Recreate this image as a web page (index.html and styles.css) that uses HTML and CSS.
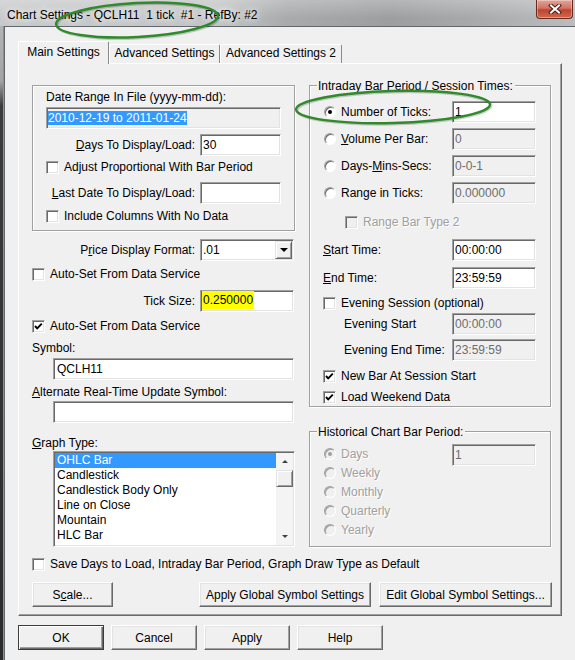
FILE: index.html
```html
<!DOCTYPE html>
<html lang="en">
<head>
    <meta charset="UTF-8">
    <meta name="viewport" content="width=device-width, initial-scale=1.0">
    <title>Chart Settings - QCLH11 1 tick #1 - RefBy: #2</title>
    <link rel="stylesheet" href="styles.css">
</head>
<body>
    <div class="window">
        <div class="titlebar">
            <span class="title">Chart Settings - QCLH11&nbsp; 1 tick&nbsp; #1 - RefBy: #2</span>
            <span class="close-btn">
                <svg width="14" height="10" viewBox="0 0 14 10">
                    <path d="M3 1.5 L11 8.5 M11 1.5 L3 8.5" stroke="#4a1e16" stroke-width="4" stroke-linecap="square"/>
                    <path d="M3 1.5 L11 8.5 M11 1.5 L3 8.5" stroke="#fff" stroke-width="2" stroke-linecap="square"/>
                </svg>
            </span>
        </div>
        <div class="frame">
            <div class="frame-edge"></div>
            <div class="client">
                <div class="tabs">
                    <div class="tab active">Main Settings</div>
                    <div class="tab tab-adv">Advanced Settings</div>
                    <div class="tab tab-adv2">Advanced Settings 2</div>
                </div>
                <div class="panel">
                    <div class="columns">
                        <!-- left column: date range, price format, symbols, graph type -->
                        <div class="col">
                            <div class="box date-box">
                                <div class="lbl">Date Range In File (yyyy-mm-dd):</div>
                                <div class="field readonly"><span class="selection">2010-12-19 to 2011-01-24</span></div>
                                <div class="form-row days-row">
                                    <span class="lbl"><u>D</u>ays To Display/Load:</span>
                                    <div class="field date-input">30</div>
                                </div>
                                <div class="check-row adjust-row"><span class="checkbox"></span>Adjust Proportional With Bar Period</div>
                                <div class="form-row last-row">
                                    <span class="lbl"><u>L</u>ast Date To Display/Load:</span>
                                    <div class="field date-input"></div>
                                </div>
                                <div class="check-row include-row"><span class="checkbox"></span>Include Columns With No Data</div>
                            </div>

                            <div class="form-row price-row">
                                <span class="lbl">P<u>r</u>ice Display Format:</span>
                                <div class="field combo">
                                    <span>.01</span>
                                    <span class="combo-btn"><span class="arrow-down"></span></span>
                                </div>
                            </div>
                            <div class="check-row autoset-row"><span class="checkbox"></span>Auto-Set From Data Service</div>
                            <div class="form-row tick-row">
                                <span class="lbl">Tick Size:</span>
                                <div class="field tick-input"><span class="marker">0.250000</span></div>
                            </div>
                            <div class="check-row autoset2-row">
                                <span class="checkbox"><svg width="11" height="11" viewBox="0 0 11 11"><path d="M2 5 L4.2 7.4 L8.8 2.6" fill="none" stroke="#000" stroke-width="1.9"/></svg></span>Auto-Set From Data Service
                            </div>
                            <div class="lbl symbol-label">Symbol:</div>
                            <div class="field wide-input symbol-input">QCLH11</div>
                            <div class="lbl alt-label"><u>A</u>lternate Real-Time Update Symbol:</div>
                            <div class="field wide-input alt-input"></div>
                            <div class="lbl graph-label"><u>G</u>raph Type:</div>
                            <div class="listbox">
                                <div class="list-items">
                                    <div class="list-item selected">OHLC Bar</div>
                                    <div class="list-item">Candlestick</div>
                                    <div class="list-item">Candlestick Body Only</div>
                                    <div class="list-item">Line on Close</div>
                                    <div class="list-item">Mountain</div>
                                    <div class="list-item">HLC Bar</div>
                                </div>
                                <div class="scrollbar">
                                    <div class="sb-btn"><span class="arrow-up"></span></div>
                                    <div class="sb-thumb"></div>
                                    <div class="sb-track"></div>
                                    <div class="sb-btn"><span class="arrow-down small"></span></div>
                                </div>
                            </div>
                        </div>

                        <!-- right column: intraday period and historical period -->
                        <div class="col">
                            <div class="group intraday">
                                <span class="group-title">Intraday Bar Period / Session Times:</span>
                                <div class="period-row">
                                    <span class="radio-label"><span class="radio on"></span>Number of Ticks:</span>
                                    <div class="field">1</div>
                                </div>
                                <div class="period-row">
                                    <span class="radio-label"><span class="radio"></span><span><u>V</u>olume Per Bar:</span></span>
                                    <div class="field disabled">0</div>
                                </div>
                                <div class="period-row">
                                    <span class="radio-label"><span class="radio"></span><span>Days-<u>M</u>ins-Secs:</span></span>
                                    <div class="field disabled">0-0-1</div>
                                </div>
                                <div class="period-row">
                                    <span class="radio-label"><span class="radio"></span>Range in Ticks:</span>
                                    <div class="field disabled">0.000000</div>
                                </div>
                                <div class="check-row range-type-row dim"><span class="checkbox off"></span>Range Bar Type 2</div>
                                <div class="period-row start-row">
                                    <span class="lbl"><u>S</u>tart Time:</span>
                                    <div class="field">00:00:00</div>
                                </div>
                                <div class="period-row end-row">
                                    <span class="lbl"><u>E</u>nd Time:</span>
                                    <div class="field">23:59:59</div>
                                </div>
                                <div class="check-row evening-row"><span class="checkbox"></span>Evening Session (optional)</div>
                                <div class="period-row evening-start">
                                    <span class="lbl indent">Evening Start</span>
                                    <div class="field disabled">00:00:00</div>
                                </div>
                                <div class="period-row evening-end">
                                    <span class="lbl indent">Evening End Time:</span>
                                    <div class="field disabled">23:59:59</div>
                                </div>
                                <div class="check-row newbar-row">
                                    <span class="checkbox"><svg width="11" height="11" viewBox="0 0 11 11"><path d="M2 5 L4.2 7.4 L8.8 2.6" fill="none" stroke="#000" stroke-width="1.9"/></svg></span>New Bar At Session Start
                                </div>
                                <div class="check-row weekend-row">
                                    <span class="checkbox"><svg width="11" height="11" viewBox="0 0 11 11"><path d="M2 5 L4.2 7.4 L8.8 2.6" fill="none" stroke="#000" stroke-width="1.9"/></svg></span>Load Weekend Data
                                </div>
                            </div>

                            <div class="group historical">
                                <span class="group-title">Historical Chart Bar Period:</span>
                                <div class="hist-options dim">
                                    <div class="radio-label hist-row"><span class="radio off on"></span>Days</div>
                                    <div class="radio-label hist-row"><span class="radio off"></span>Weekly</div>
                                    <div class="radio-label hist-row"><span class="radio off"></span>Monthly</div>
                                    <div class="radio-label hist-row"><span class="radio off"></span>Quarterly</div>
                                    <div class="radio-label hist-row"><span class="radio off"></span>Yearly</div>
                                </div>
                                <div class="field disabled">1</div>
                            </div>
                        </div>
                    </div>

                    <div class="check-row save-row"><span class="checkbox"></span>Save Days to Load, Intraday Bar Period, Graph Draw Type as Default</div>

                    <div class="panel-buttons">
                        <div class="btn scale-btn">S<u>c</u>ale...</div>
                        <div class="btn-group">
                            <div class="btn apply-global">Apply Global Symbol Settings</div>
                            <div class="btn edit-global">Edit Global Symbol Settings...</div>
                        </div>
                    </div>
                </div>

                <div class="dialog-buttons">
                    <div class="btn default">OK</div>
                    <div class="btn">Cancel</div>
                    <div class="btn">Apply</div>
                    <div class="btn">Help</div>
                </div>
            </div>
        </div>

        <!-- hand-drawn marker rings -->
        <svg class="rings" width="575" height="660" viewBox="0 0 575 660">
            <ellipse cx="138" cy="21" rx="81" ry="17" transform="rotate(-3 138 21)" fill="none" stroke="rgba(0,0,0,0.18)" stroke-width="3"/>
            <ellipse cx="137" cy="20" rx="81" ry="17" transform="rotate(-3 137 20)" fill="none" stroke="#2f8a2a" stroke-width="2.4"/>
            <ellipse cx="394" cy="108" rx="97" ry="16" transform="rotate(-1.5 394 108)" fill="none" stroke="rgba(0,0,0,0.18)" stroke-width="3"/>
            <ellipse cx="393" cy="107" rx="97" ry="16" transform="rotate(-1.5 393 107)" fill="none" stroke="#2f8a2a" stroke-width="2.4"/>
        </svg>
    </div>
</body>
</html>
```

FILE: styles.css
```css
* {
    margin: 0;
    padding: 0;
    box-sizing: border-box;
}
body {
    background-color: #262626;
    font-family: "Liberation Sans", Arial, sans-serif;
    font-size: 12px;
    color: #000;
    width: 575px;
    height: 660px;
    overflow: hidden;
}
u {
    text-decoration-thickness: 1px;
    text-underline-offset: 1px;
}
.window {
    position: relative;
    width: 575px;
    height: 660px;
}

/* glass title bar */
.titlebar {
    height: 26px;
    display: flex;
    align-items: flex-start;
    padding-left: 7px;
    background:
        linear-gradient(to bottom, rgba(255, 255, 255, 0.25), rgba(255, 255, 255, 0) 70%),
        linear-gradient(to right, #c8c9ca 0%, #c3c4c5 38%, #a9aaab 50%, #9d9e9f 68%, #a8a9aa 82%, #bbbcbd 100%);
}
.title {
    margin-top: 8px;
    line-height: 14px;
    text-shadow: 0 0 6px #fff, 0 0 10px rgba(255, 255, 255, 0.8);
}
.close-btn {
    margin-left: auto;
    margin-right: 2px;
    width: 37px;
    height: 19px;
    display: flex;
    align-items: center;
    justify-content: center;
    border: 1px solid #6b2a20;
    border-top: none;
    border-radius: 0 0 4px 4px;
    background: linear-gradient(to bottom, #e3a597 0%, #d27363 45%, #c04430 55%, #cf6a4f 100%);
    box-shadow: inset 0 0 0 1px rgba(255, 255, 255, 0.35);
}

/* window frame and client area */
.frame {
    display: flex;
    height: 634px;
}
.frame-edge {
    width: 4px;
    background: linear-gradient(to bottom, #b4b4b4 0, #a3a3a3 55px, #3c3c3c 80px, #2b2b2b 100%);
    box-shadow: inset -1px 0 0 #8f8f8f;
}
.client {
    flex: 1;
    background-color: #f0f0f0;
    border-top: 1px solid #62676b;
    border-left: 1px solid #62676b;
    padding: 14px 0 0 13px;
}

/* tab strip */
.tabs {
    display: flex;
    align-items: flex-end;
    height: 22px;
    position: relative;
    z-index: 1;
}
.tab {
    height: 19px;
    line-height: 17px;
    text-align: center;
    background-color: #f0f0f0;
    border: 1px solid;
    border-color: #fff #8a8a8a transparent #fff;
    border-bottom: none;
    border-radius: 2px 2px 0 0;
    white-space: nowrap;
}
.tab.active {
    width: 91px;
    height: 23px;
    line-height: 20px;
    margin-bottom: -1px;
}
.tab-adv {
    width: 111px;
}
.tab-adv2 {
    width: 122px;
}
.panel {
    width: 544px;
    height: 553px;
    border: 1px solid;
    border-color: #fff #696969 #696969 #fff;
    box-shadow: inset -1px -1px 0 #a0a0a0;
    padding: 21px 9px 0 13px;
}
.columns {
    display: grid;
    grid-template-columns: 263px 242px;
    column-gap: 14px;
    height: 462px;
}

/* common controls */
.lbl {
    line-height: 14px;
    white-space: nowrap;
}
.field {
    height: 22px;
    border: 1px solid;
    border-color: #a0a0a0 #fff #fff #a0a0a0;
    box-shadow: inset 1px 1px 0 #696969, inset -1px -1px 0 #e3e3e3;
    background-color: #fff;
    padding-left: 2px;
    line-height: 20px;
    white-space: nowrap;
    overflow: hidden;
}
.field.disabled {
    background-color: #f0f0f0;
    color: #6d6d6d;
}
.field.readonly {
    background-color: #f0f0f0;
    margin-top: 3px;
    padding-left: 1px;
}
.selection {
    background-color: #3399ff;
    color: #fff;
}
.form-row {
    display: flex;
    justify-content: flex-end;
    align-items: center;
    gap: 5px;
}
.check-row {
    display: flex;
    align-items: center;
    gap: 5px;
    height: 13px;
    line-height: 13px;
    white-space: nowrap;
}
.checkbox {
    flex: none;
    width: 13px;
    height: 13px;
    border: 1px solid;
    border-color: #a0a0a0 #fff #fff #a0a0a0;
    box-shadow: inset 1px 1px 0 #696969, inset -1px -1px 0 #e3e3e3;
    background-color: #fff;
}
.checkbox svg {
    display: block;
}
.checkbox.off {
    background-color: #f0f0f0;
}
.radio-label {
    display: flex;
    align-items: center;
    gap: 5px;
    white-space: nowrap;
}
.radio {
    position: relative;
    flex: none;
    width: 12px;
    height: 12px;
    margin-left: 1px;
    border-radius: 50%;
    border: 1px solid;
    border-color: #a0a0a0 #fff #fff #a0a0a0;
    box-shadow: inset 1px 1px 0 #696969;
    background-color: #fff;
}
.radio.on::after {
    content: "";
    position: absolute;
    left: 3px;
    top: 3px;
    width: 4px;
    height: 4px;
    border-radius: 50%;
    background-color: #000;
}
.radio.off {
    background-color: #f0f0f0;
    box-shadow: inset 1px 1px 0 #a0a0a0;
}
.radio.off.on::after {
    background-color: #a0a0a0;
}
.dim {
    color: #a0a0a0;
    text-shadow: 1px 1px 0 #fff;
}
.btn {
    height: 25px;
    display: flex;
    align-items: center;
    justify-content: center;
    background-color: #f0f0f0;
    border: 1px solid;
    border-color: #fff #696969 #696969 #fff;
    box-shadow: inset -1px -1px 0 #a0a0a0, inset 1px 1px 0 #e3e3e3;
    white-space: nowrap;
}
.btn.default {
    border-color: #3c3c3c;
    box-shadow: inset 1px 1px 0 #fff, inset -1px -1px 0 #696969, inset -2px -2px 0 #a0a0a0;
}
.arrow-down {
    width: 0;
    height: 0;
    border-left: 4px solid transparent;
    border-right: 4px solid transparent;
    border-top: 4px solid #000;
}
.arrow-down.small {
    border-left-width: 3px;
    border-right-width: 3px;
    border-top: 3px solid #404040;
}
.arrow-up {
    width: 0;
    height: 0;
    border-left: 3px solid transparent;
    border-right: 3px solid transparent;
    border-bottom: 3px solid #404040;
}

/* date range box */
.box {
    border: 1px solid #a0a0a0;
    box-shadow: inset 1px 1px 0 #fff, 1px 1px 0 #fff;
}
.date-box {
    height: 146px;
    padding: 4px 13px 0 13px;
}
.date-input {
    width: 81px;
}
.days-row {
    margin-top: 5px;
}
.adjust-row {
    margin-top: 5px;
}
.last-row {
    margin-top: 8px;
}
.include-row {
    margin-top: 6px;
}

/* left column fields */
.price-row {
    margin-top: 8px;
    padding-right: 1px;
}
.combo {
    width: 94px;
    display: flex;
    align-items: center;
    justify-content: space-between;
    padding-right: 1px;
}
.combo-btn {
    width: 17px;
    height: 18px;
    display: flex;
    align-items: center;
    justify-content: center;
    background-color: #f0f0f0;
    border: 1px solid;
    border-color: #e3e3e3 #696969 #696969 #e3e3e3;
    box-shadow: inset 1px 1px 0 #fff, inset -1px -1px 0 #a0a0a0;
}
.autoset-row {
    margin-top: 7px;
}
.tick-row {
    margin-top: 9px;
    padding-right: 1px;
}
.tick-input {
    width: 94px;
    padding-left: 1px;
}
.marker {
    display: inline-block;
    height: 18px;
    line-height: 18px;
    vertical-align: top;
    padding: 0 1px;
    background-color: #ffff00;
}
.autoset2-row {
    margin-top: 8px;
}
.symbol-label {
    margin-top: 8px;
}
.wide-input {
    width: 241px;
    margin-left: 21px;
    padding-left: 3px;
}
.symbol-input {
    margin-top: 3px;
}
.alt-label {
    margin-top: 5px;
}
.alt-input {
    margin-top: 2px;
}
.graph-label {
    margin-top: 13px;
}
.listbox {
    display: flex;
    width: 242px;
    height: 96px;
    margin: 1px 0 0 21px;
    padding: 1px;
    background-color: #fff;
    border: 1px solid;
    border-color: #a0a0a0 #fff #fff #a0a0a0;
    box-shadow: inset 1px 1px 0 #696969, inset -1px -1px 0 #e3e3e3;
}
.list-items {
    flex: 1;
}
.list-item {
    height: 15px;
    line-height: 15px;
    padding-left: 2px;
    white-space: nowrap;
}
.list-item.selected {
    background-color: #3399ff;
    color: #fff;
}
.scrollbar {
    width: 17px;
    display: flex;
    flex-direction: column;
    background-color: #f4f4f4;
}
.sb-btn {
    height: 17px;
    display: flex;
    align-items: center;
    justify-content: center;
}
.sb-thumb {
    height: 17px;
    background-color: #f0f0f0;
    border: 1px solid;
    border-color: #e3e3e3 #696969 #696969 #e3e3e3;
    box-shadow: inset 1px 1px 0 #fff, inset -1px -1px 0 #a0a0a0;
}
.sb-track {
    flex: 1;
}

/* intraday / historical groups */
.group {
    position: relative;
    border: 1px solid #a0a0a0;
    box-shadow: inset 1px 1px 0 #fff, 1px 1px 0 #fff;
}
.group-title {
    position: absolute;
    top: -7px;
    left: 7px;
    padding: 0 2px 0 1px;
    line-height: 14px;
    background-color: #f0f0f0;
    white-space: nowrap;
}
.intraday {
    height: 322px;
    padding: 15px 14px 0 13px;
}
.period-row {
    display: grid;
    grid-template-columns: 129px 84px;
    align-items: center;
    height: 22px;
}
.period-row + .period-row {
    margin-top: 5px;
}
.range-type-row {
    margin-top: 12px;
    padding-left: 22px;
}
.period-row.start-row {
    margin-top: 10px;
}
.period-row.end-row {
    margin-top: 6px;
}
.evening-row {
    margin-top: 8px;
}
.period-row.evening-start {
    margin-top: 3px;
}
.period-row.evening-end {
    margin-top: 4px;
}
.indent {
    padding-left: 21px;
}
.newbar-row {
    margin-top: 9px;
}
.weekend-row {
    margin-top: 8px;
}
.historical {
    margin-top: 24px;
    height: 116px;
    padding: 12px 14px 0 13px;
    display: grid;
    grid-template-columns: 129px 84px;
    align-items: start;
}
.hist-row {
    height: 19px;
}

/* bottom of the tab page */
.save-row {
    margin-top: 11px;
}
.panel-buttons {
    display: flex;
    justify-content: space-between;
    margin-top: 11px;
}
.scale-btn {
    width: 81px;
}
.btn-group {
    display: flex;
    gap: 8px;
}
.apply-global {
    width: 172px;
}
.edit-global {
    width: 173px;
}
.dialog-buttons {
    display: flex;
    gap: 7px;
    margin-top: 9px;
}
.dialog-buttons .btn {
    width: 86px;
}

.rings {
    position: absolute;
    left: 0;
    top: 0;
    pointer-events: none;
}
```
